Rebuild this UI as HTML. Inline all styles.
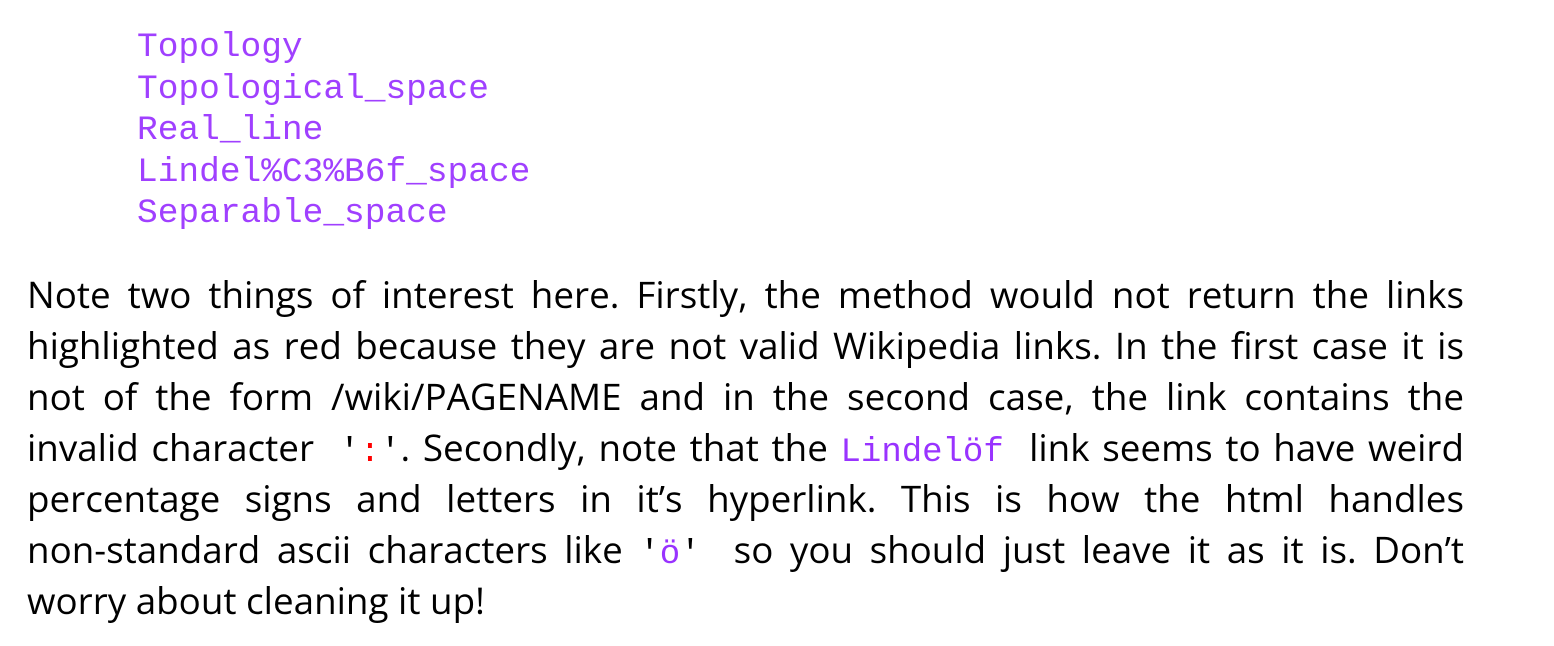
<!DOCTYPE html>
<html><head><meta charset="utf-8"><style>
body{margin:0;background:#fff;width:1554px;height:646px;overflow:hidden}
pre{position:absolute;left:137px;top:27px;margin:0;font-family:"Courier New","Liberation Mono",monospace;font-size:34.5px;line-height:41.5px;color:#a040ff;font-weight:normal}
.p{position:absolute;left:27px;top:269px;width:1437px;font-family:"Open Sans","DejaVu Sans","Liberation Sans",sans-serif;font-size:36.8px;color:#000}
.l{height:51px;line-height:51px;text-align:justify;text-align-last:justify;white-space:nowrap}
.l.last{text-align-last:left}
code{font-family:"Courier New","Liberation Mono",monospace;font-size:34px}
.r{color:#f00}.u{color:#9933ff}
</style></head><body>
<pre>Topology
Topological_space
Real_line
Lindel%C3%B6f_space
Separable_space</pre>
<div class="p">
<div class="l">Note two things of interest here. Firstly, the method would not return the links</div>
<div class="l">highlighted as red because they are not valid Wikipedia links. In the first case it is</div>
<div class="l">not of the form /wiki/PAGENAME and in the second case, the link contains the</div>
<div class="l">invalid character &nbsp;<code>'<span class="r">:</span>'</code>. Secondly, note that the <code class="u">Lindelöf</code> &nbsp;link seems to have weird</div>
<div class="l">percentage signs and letters in it’s hyperlink. This is how the html handles</div>
<div class="l">non-standard ascii characters like <code>'<span class="u">ö</span>'</code> &nbsp;so you should just leave it as it is. Don’t</div>
<div class="l last">worry about cleaning it up!</div>
</div>
</body></html>
